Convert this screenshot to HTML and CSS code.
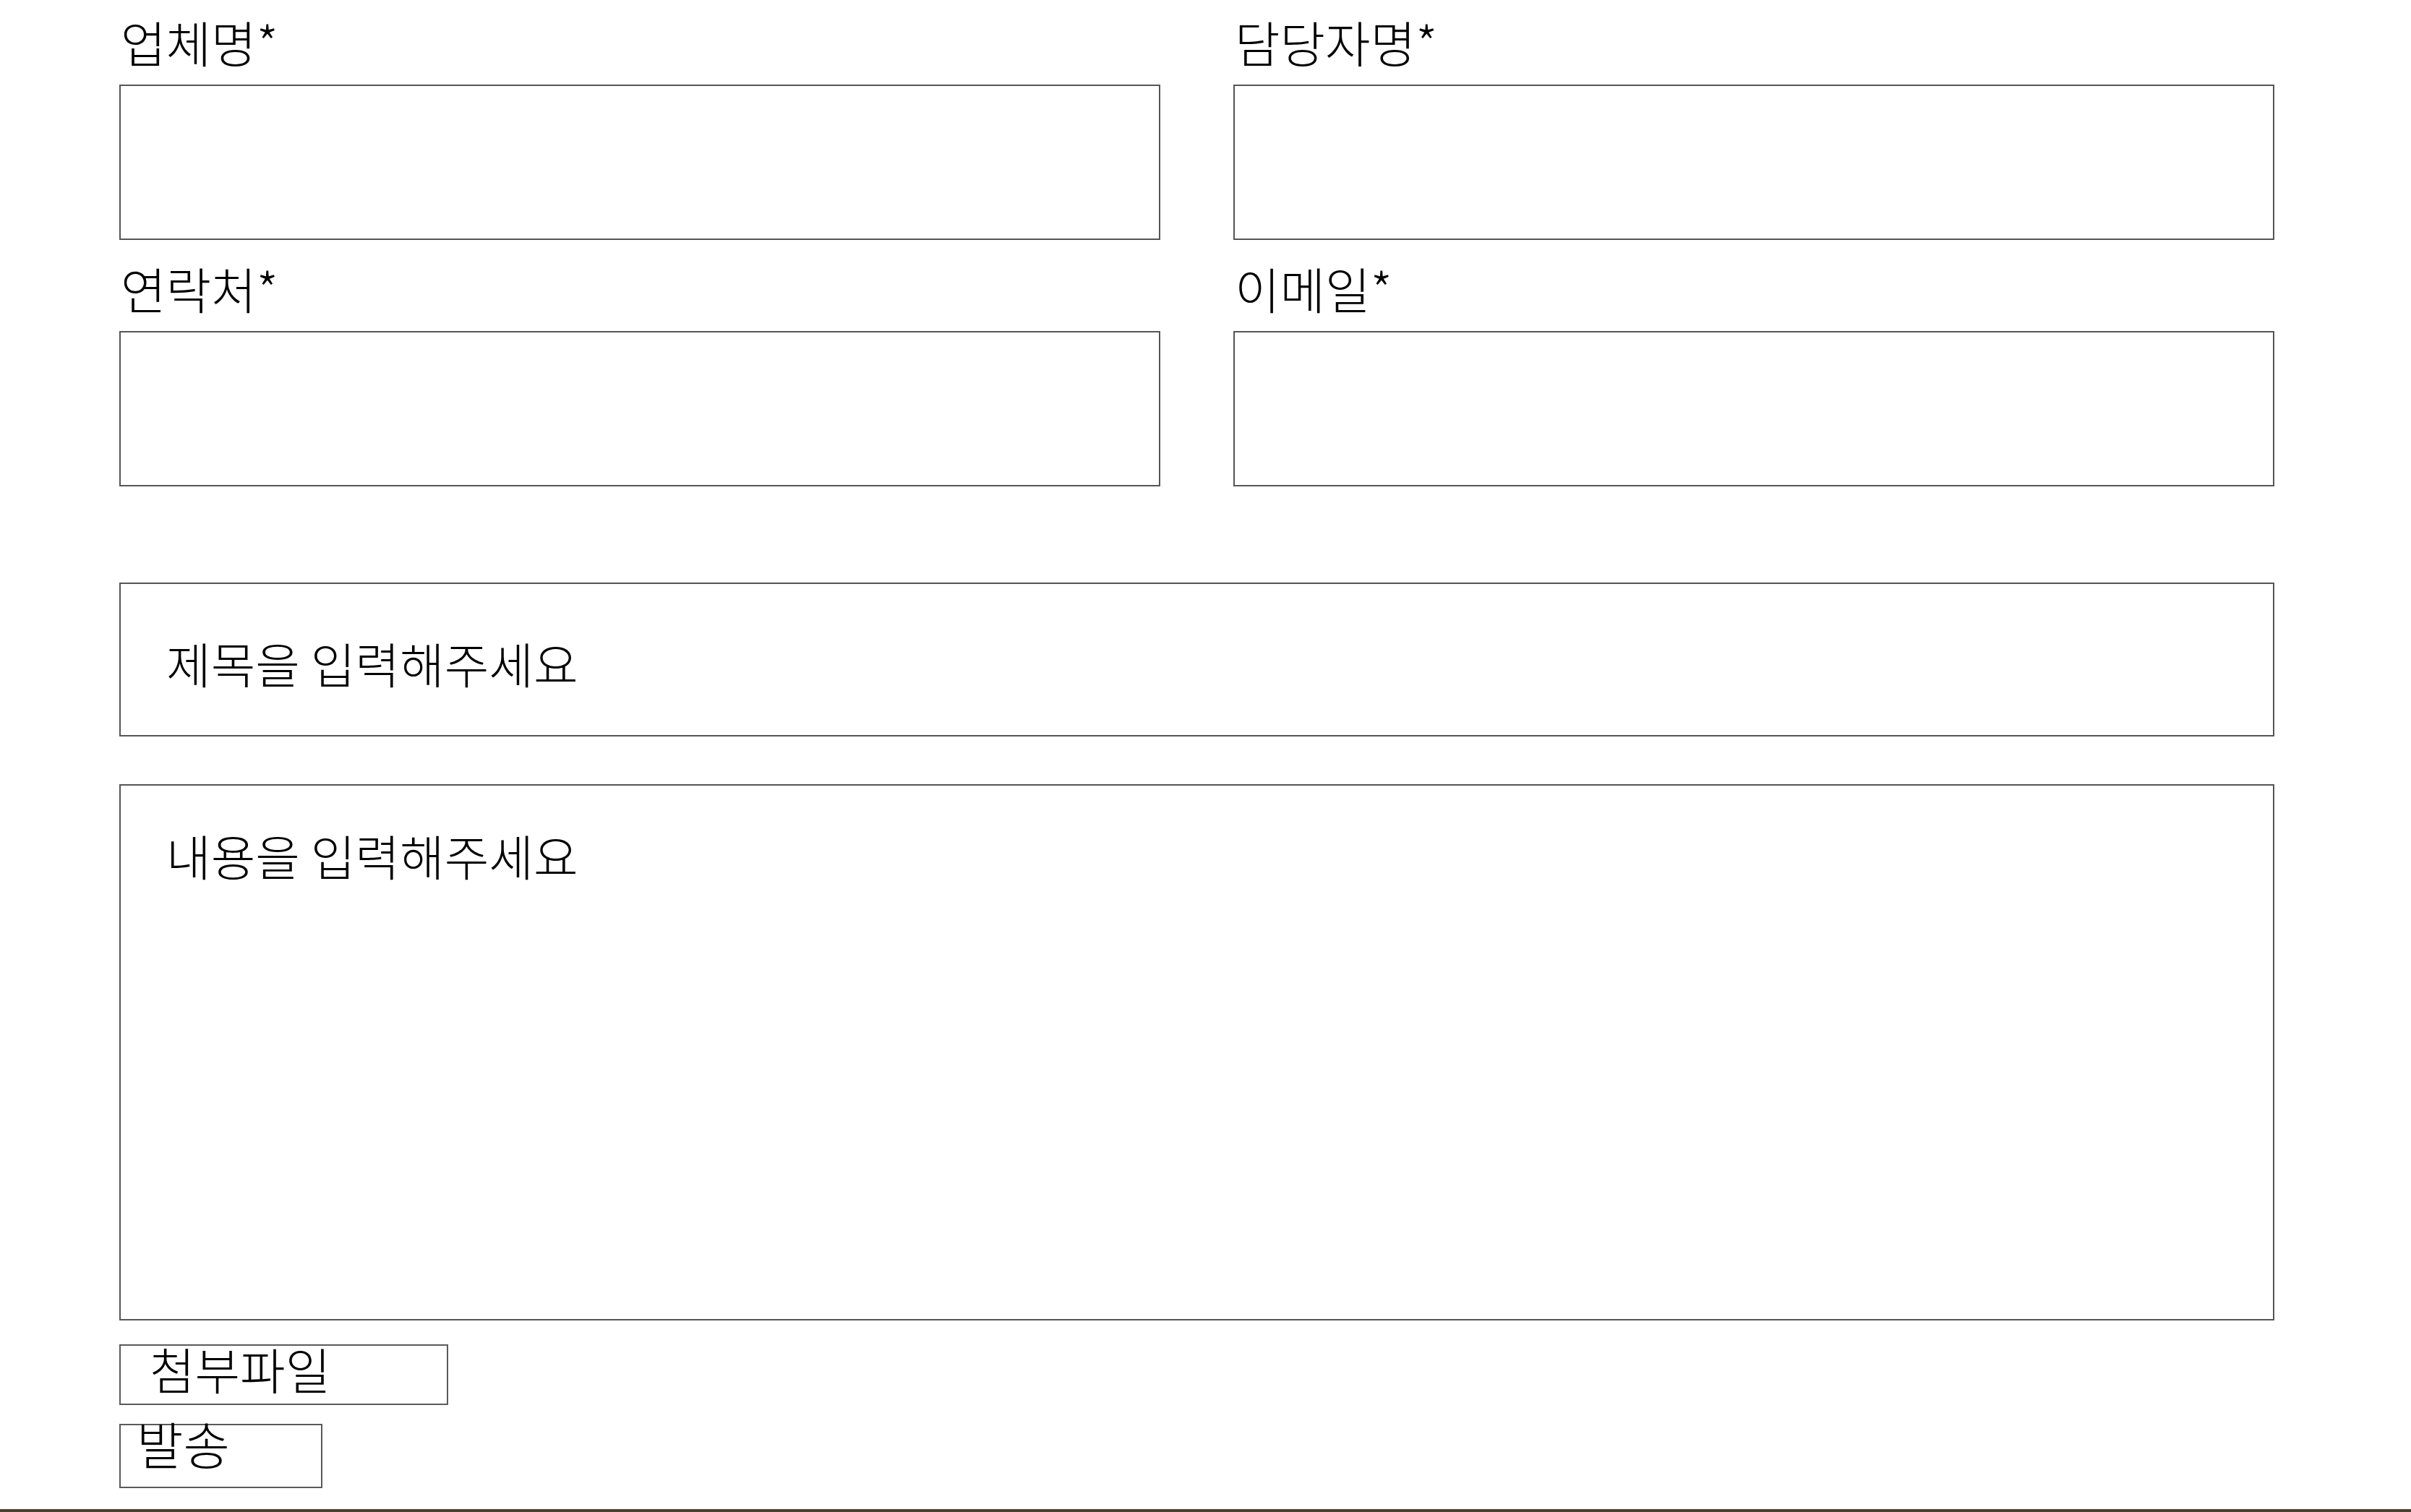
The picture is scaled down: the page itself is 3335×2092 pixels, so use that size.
FILE: index.html
```html
<!DOCTYPE html>
<html>
	<head>
		<meta charset="utf-8">
		<title>문의하기</title>
		<link rel="stylesheet" href="styles.css">
	</head>
	<body>
		<form class="contact" action="#">
			<div class="row">
				<div class="field">
					<label for="company">업체명*</label>
					<input type="text" id="company">
				</div>
				<div class="field">
					<label for="manager">담당자명*</label>
					<input type="text" id="manager">
				</div>
			</div>
			<div class="row">
				<div class="field">
					<label for="phone">연락처*</label>
					<input type="text" id="phone">
				</div>
				<div class="field">
					<label for="email">이메일*</label>
					<input type="text" id="email">
				</div>
			</div>
			<input type="text" class="subject" placeholder="제목을 입력해주세요">
			<textarea class="content" placeholder="내용을 입력해주세요"></textarea>
			<label class="file">첨부파일<input type="file"></label>
			<button type="submit" class="send">발송</button>
		</form>
		<div class="footer"></div>
	</body>
</html>
```

FILE: styles.css
```css
*{margin: 0; padding: 0; box-sizing: border-box;}
html,body{background: #fff;}
body{font-family: "Noto Sans CJK KR", sans-serif; color: #000;}

.contact{width: 2981px; margin-left: 165px; padding-top: 22px; display: flex; flex-direction: column;}
.row{display: grid; grid-template-columns: 1440px 1440px; column-gap: 101px; margin-bottom: 31px;}
.row + .row{margin-bottom: 0;}
.field label{display: block; font-size: 68px; font-weight: 300; line-height: 72px; margin-left: 2px;}
.field input{display: block; width: 100%; height: 215px; margin-top: 23px;
border: 2px solid #555; outline: none; font-family: inherit; font-size: 60px; padding: 0 40px;}

.subject{width: 100%; height: 213px; margin-top: 133px; border: 2px solid #555; outline: none;
padding: 8px 63px 0; font-family: inherit; font-size: 67px; font-weight: 300;}
.content{width: 100%; height: 742px; margin-top: 66px; border: 2px solid #555; outline: none; resize: none;
padding: 47px 63px; font-family: inherit; font-size: 67px; font-weight: 300; line-height: normal;}
.subject::placeholder,.content::placeholder{color: #000; opacity: 1;}

.file{display: block; width: 455px; height: 84px; margin-top: 33px; border: 2px solid #5a5a5a;
padding-left: 40px; font-size: 68px; font-weight: 300; line-height: 64px; cursor: pointer;}
.file input{display: none;}

.send{display: block; width: 281px; height: 89px; margin-top: 26px; border: 2px solid #5a5a5a;
background: #fff; padding: 0 0 36px 22px; text-align: left; font-family: inherit; font-size: 70px;
font-weight: 300; line-height: 49px; color: #000; cursor: pointer;}

.footer{height: 4px; margin-top: 29px; background: #4a4133;}
```
